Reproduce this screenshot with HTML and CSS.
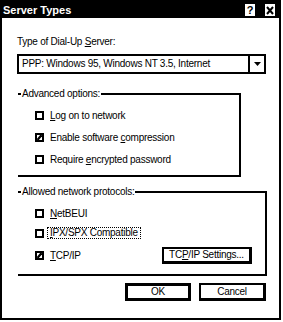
FILE: index.html
```html
<!DOCTYPE html>
<html>
<head>
<meta charset="utf-8">
<link rel="stylesheet" href="styles.css">
</head>
<body>
<div class="window">
  <div class="titlebar">
    <span class="title">Server Types</span>
    <div class="tb-buttons">
      <span class="tb-btn">?</span>
      <span class="tb-btn"><svg width="10" height="12" viewBox="0 0 10 12"><path d="M2 3 L8 10 M8 3 L2 10" stroke="#000" stroke-width="2" fill="none"/></svg></span>
    </div>
  </div>
  <div class="content">
    <div class="label">Type of Dial-Up <u>S</u>erver:</div>
    <div class="combo">
      <span class="combo-text">PPP: Windows 95, Windows NT 3.5, Internet</span>
      <span class="combo-btn"><svg width="7" height="4" viewBox="0 0 7 4"><path d="M0 0 H7 L3.5 4 Z" fill="#000"/></svg></span>
    </div>
    <fieldset class="group group-adv">
      <legend>Advanced options:</legend>
      <div class="row"><span class="cb"></span><span><u>L</u>og on to network</span></div>
      <div class="row"><span class="cb checked"><svg width="5" height="5" viewBox="0 0 5 5"><path d="M0.5 5 L4.5 0" stroke="#000" stroke-width="2.2"/></svg></span><span>Enable software <u>c</u>ompression</span></div>
      <div class="row"><span class="cb"></span><span>Require <u>e</u>ncrypted password</span></div>
    </fieldset>
    <fieldset class="group group-proto">
      <legend>Allowed network protocols:</legend>
      <div class="row row-s"><span class="cb"></span><span><u>N</u>etBEUI</span></div>
      <div class="row row-s"><span class="cb"></span><span class="focus"><u>I</u>PX/SPX Compatible</span></div>
      <div class="row row-btn"><span class="cb checked"><svg width="5" height="5" viewBox="0 0 5 5"><path d="M0.5 5 L4.5 0" stroke="#000" stroke-width="2.2"/></svg></span><span><u>T</u>CP/IP</span><button class="btn btn-settings">TC<u>P</u>/IP Settings...</button></div>
    </fieldset>
    <div class="actions">
      <button class="btn btn-default">OK</button>
      <button class="btn btn-cancel">Cancel</button>
    </div>
  </div>
</div>
</body>
</html>
```
FILE: styles.css
```css
* { box-sizing: border-box; }
html, body { margin: 0; padding: 0; background: #fff; }
body {
  font-family: "Liberation Sans", Arial, sans-serif;
  font-size: 10px;
  letter-spacing: -0.25px;
  color: #000;
}
.window {
  width: 281px;
  height: 320px;
  border: 2px solid #000;
  border-top: 0;
  background: #fff;
  display: flex;
  flex-direction: column;
}
.titlebar {
  height: 18px;
  background: #000;
  display: flex;
  align-items: center;
  padding: 2px 2px 0 3px;
  margin: 0 -2px;
  padding-right: 6px;
}
.title {
  color: #fff;
  font-weight: bold;
  font-size: 11px;
  letter-spacing: 0;
  line-height: 16px;
  flex: 1;
}
.tb-buttons { display: flex; gap: 10px; }
.tb-btn {
  width: 10px;
  height: 12px;
  background: #fff;
  color: #000;
  font-weight: bold;
  font-size: 11px;
  line-height: 12px;
  text-align: center;
  letter-spacing: 0;
  display: flex;
  align-items: center;
  justify-content: center;
}
.tb-btn svg { display: block; }
.content {
  display: flex;
  flex-direction: column;
  padding: 0 12px 0 15px;
}
.label {
  margin-top: 17px;
  line-height: 13px;
}
.combo {
  margin-top: 6px;
  margin-right: 1px;
  height: 20px;
  border: 2px solid #000;
  display: flex;
}
.combo-text {
  flex: 1;
  line-height: 16px;
  padding-left: 3px;
  white-space: nowrap;
}
.combo-btn {
  width: 16px;
  border-left: 2px solid #000;
  display: flex;
  align-items: center;
  justify-content: center;
}
.combo-btn svg { display: block; }
.group {
  margin: 0 0 0 1px;
  padding: 0;
  border: 2px solid #000;
  border-left: 0;
  min-width: 0;
}
.group legend {
  margin-left: 3px;
  padding: 0 1px;
  line-height: 13px;
}
.group-adv {
  margin-top: 13px;
  margin-right: 26px;
  padding-top: 4px;
  padding-bottom: 5px;
}
.group-proto {
  margin-top: 8px;
  padding-top: 5px;
  padding-bottom: 10px;
}
.row {
  height: 22px;
  display: flex;
  align-items: center;
  padding-left: 17px;
  white-space: nowrap;
}
.row-s { height: 20px; }
.row-btn {
  height: 17px;
  margin-top: 4px;
  padding-right: 13px;
}
.cb {
  width: 9px;
  height: 9px;
  border: 2px solid #000;
  background: #fff;
  flex: none;
  margin-right: 6px;
  display: flex;
}
.cb svg { display: block; }
.focus {
  border: 1px dotted #000;
  padding: 0 2px;
  margin-left: -3px;
  line-height: 10px;
}
.btn {
  font-family: inherit;
  font-size: 10px;
  letter-spacing: -0.25px;
  color: #000;
  background: #fff;
  border-style: solid;
  border-color: #000;
  border-width: 2px 3px 3px 2px;
  padding: 0;
  margin: 0;
  height: 18px;
  line-height: 12px;
}
.btn-settings {
  margin-left: auto;
  width: 90px;
  height: 17px;
}
.actions {
  margin-top: 7px;
  margin-right: 1px;
  display: flex;
  justify-content: flex-end;
  gap: 8px;
}
.btn-default { width: 66px; border-width: 3px; }
.btn-cancel { width: 67px; }
```
